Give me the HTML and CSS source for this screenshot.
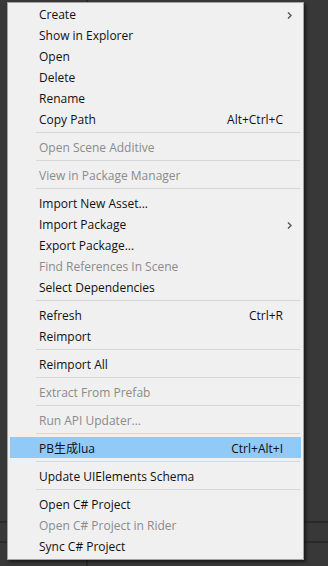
FILE: index.html
```html
<!DOCTYPE html>
<html>
<head>
    <title>Project context menu</title>
    <link rel="stylesheet" href="styles.css">
</head>
<body>
    <div class="context-menu">
        <div class="menu-item">Create<span class="submenu-arrow"><svg width="5" height="7" viewBox="0 0 5 7"><path d="M1 0.5 L4 3.5 L1 6.5" fill="none" stroke="currentColor" stroke-width="1.4"/></svg></span></div>
        <div class="menu-item">Show in Explorer</div>
        <div class="menu-item">Open</div>
        <div class="menu-item">Delete</div>
        <div class="menu-item">Rename</div>
        <div class="menu-item">Copy Path<span class="shortcut">Alt+Ctrl+C</span></div>
        <div class="separator"></div>
        <div class="menu-item disabled">Open Scene Additive</div>
        <div class="separator"></div>
        <div class="menu-item disabled">View in Package Manager</div>
        <div class="separator"></div>
        <div class="menu-item">Import New Asset...</div>
        <div class="menu-item">Import Package<span class="submenu-arrow"><svg width="5" height="7" viewBox="0 0 5 7"><path d="M1 0.5 L4 3.5 L1 6.5" fill="none" stroke="currentColor" stroke-width="1.4"/></svg></span></div>
        <div class="menu-item">Export Package...</div>
        <div class="menu-item disabled">Find References In Scene</div>
        <div class="menu-item">Select Dependencies</div>
        <div class="separator"></div>
        <div class="menu-item">Refresh<span class="shortcut">Ctrl+R</span></div>
        <div class="menu-item">Reimport</div>
        <div class="separator"></div>
        <div class="menu-item">Reimport All</div>
        <div class="separator"></div>
        <div class="menu-item disabled">Extract From Prefab</div>
        <div class="separator"></div>
        <div class="menu-item disabled">Run API Updater...</div>
        <div class="separator"></div>
        <div class="menu-item active">PB生成lua<span class="shortcut">Ctrl+Alt+I</span></div>
        <div class="separator"></div>
        <div class="menu-item">Update UIElements Schema</div>
        <div class="separator"></div>
        <div class="menu-item">Open C# Project</div>
        <div class="menu-item disabled">Open C# Project in Rider</div>
        <div class="menu-item">Sync C# Project</div>
    </div>
</body>
</html>
```

FILE: styles.css
```css
:root {
    --editor-bg: #383838;
    --editor-line: #2a2a2a;
    --menu-bg: #f0f0f0;
    --menu-border: #a3a3a3;
    --separator-color: #d7d7d7;
    --text-color: #101010;
    --disabled-color: #8b8b8b;
    --highlight-color: #91c9f7;
}
* {
    box-sizing: border-box;
}
body {
    margin: 0;
    padding: 0;
    height: 566px;
    overflow: hidden;
    font-family: "Open Sans", "Noto Sans CJK SC", sans-serif;
    font-size: 12px;
    color: var(--text-color);
    background-color: var(--editor-bg);
    background-image:
        linear-gradient(to right, transparent 86px, var(--editor-line) 86px, var(--editor-line) 88px, transparent 88px),
        linear-gradient(to bottom, transparent 521px, var(--editor-line) 521px, var(--editor-line) 523px, transparent 523px, transparent 541px, var(--editor-line) 541px, var(--editor-line) 543px, transparent 543px);
}
.context-menu {
    margin: 2px 0 0 7px;
    width: 297px;
    background-color: var(--menu-bg);
    border: 1px solid var(--menu-border);
    padding: 0 1px 3px 1px;
    box-shadow: 2px 2px 3px rgba(0, 0, 0, 0.55);
}
.menu-item {
    display: flex;
    align-items: center;
    height: 21px;
    margin: 0 1px;
    padding: 3px 18px 0 29px;
    white-space: nowrap;
    line-height: 18px;
}
.menu-item.disabled {
    color: var(--disabled-color);
}
.menu-item.active {
    background-color: var(--highlight-color);
}
.shortcut {
    margin-left: auto;
}
.submenu-arrow {
    display: flex;
    margin-left: auto;
    margin-right: -9px;
    color: #555;
}
.separator {
    height: 7px;
    margin-left: 27px;
    margin-right: 2px;
    padding-top: 3px;
}
.separator::after {
    content: "";
    display: block;
    height: 1px;
    background-color: var(--separator-color);
}
```
